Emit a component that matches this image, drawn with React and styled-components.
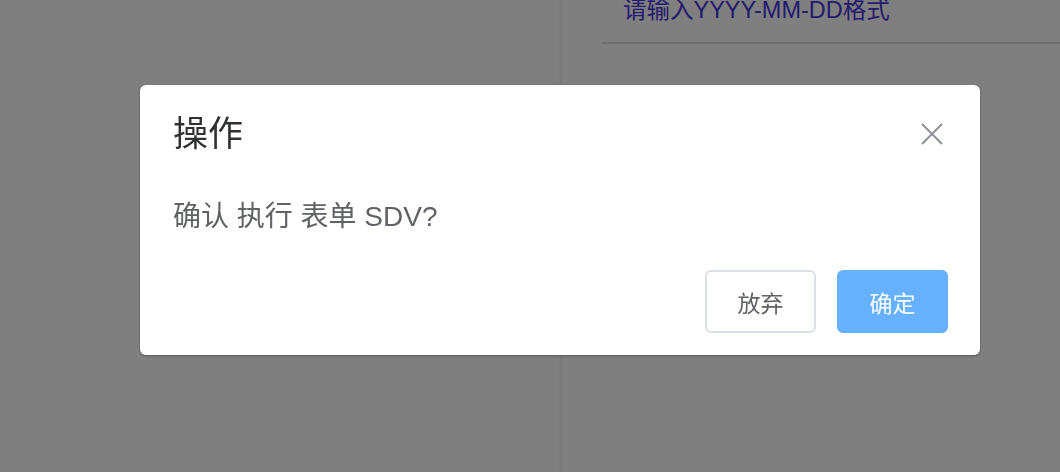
import React from 'react';
import styled, { createGlobalStyle } from 'styled-components';

const GlobalStyle = createGlobalStyle`
  html, body {
    margin: 0;
    padding: 0;
    width: 100%;
    height: 100%;
    overflow: hidden;
    font-family: "Liberation Sans", "Noto Sans CJK SC", sans-serif;
  }
  #root {
    height: 100%;
  }
`;

const Page = styled.div`
  display: flex;
  height: 100vh;
  background: #fefefe;
`;

const Aside = styled.div`
  width: 561px;
  flex-shrink: 0;
`;

const Panel = styled.div`
  flex: 1;
  border-left: 1px solid #eceef3;
  box-shadow: -2px 0 4px rgba(0, 0, 0, 0.03);
  padding-left: 40px;
`;

const FieldHint = styled.div`
  margin-top: -5px;
  padding: 0 0 17px 21px;
  font-size: 23.5px;
  line-height: 30px;
  color: #4a36dc;
  border-bottom: 2px solid #dcdcdc;
`;

const Mask = styled.div`
  position: fixed;
  inset: 0;
  background: rgba(0, 0, 0, 0.5);
`;

const Dialog = styled.div`
  position: fixed;
  left: 140px;
  top: 85px;
  width: 840px;
  box-sizing: border-box;
  background: #fff;
  border-radius: 6px;
  box-shadow: 0 1px 3px rgba(0, 0, 0, 0.3);
  padding: 29px 32px 22px 33px;
`;

const Header = styled.div`
  display: flex;
  align-items: center;
  justify-content: space-between;
`;

const Title = styled.span`
  font-size: 35px;
  line-height: 40px;
  color: #303133;
`;

const Close = styled.button`
  display: flex;
  border: none;
  background: none;
  padding: 0;
  margin-right: 5px;
  cursor: pointer;
`;

const Body = styled.div`
  margin-top: 46px;
  font-size: 28px;
  line-height: 34px;
  color: #606266;
`;

const Footer = styled.div`
  display: flex;
  justify-content: flex-end;
  gap: 21px;
  margin-top: 36px;
`;

const Button = styled.button`
  width: 111px;
  height: 63px;
  box-sizing: border-box;
  border-radius: 6px;
  font-family: inherit;
  font-size: 23px;
  cursor: pointer;
  border: 2px solid ${p => (p.$primary ? '#66b1ff' : '#dcdfe6')};
  background: ${p => (p.$primary ? '#66b1ff' : '#fff')};
  color: ${p => (p.$primary ? '#fff' : '#606266')};
`;

const CloseIcon = () => (
  <svg width="22" height="22" viewBox="0 0 22 22">
    <path d="M1 1 L21 21 M21 1 L1 21" stroke="#909399" strokeWidth="2" fill="none" />
  </svg>
);

const App = () => {
  return (
    <>
      <GlobalStyle />
      <Page>
        <Aside />
        <Panel>
          <FieldHint>请输入YYYY-MM-DD格式</FieldHint>
        </Panel>
      </Page>
      <Mask />
      <Dialog>
        <Header>
          <Title>操作</Title>
          <Close><CloseIcon /></Close>
        </Header>
        <Body>确认 执行 表单 SDV?</Body>
        <Footer>
          <Button>放弃</Button>
          <Button $primary>确定</Button>
        </Footer>
      </Dialog>
    </>
  );
};

export default App;
